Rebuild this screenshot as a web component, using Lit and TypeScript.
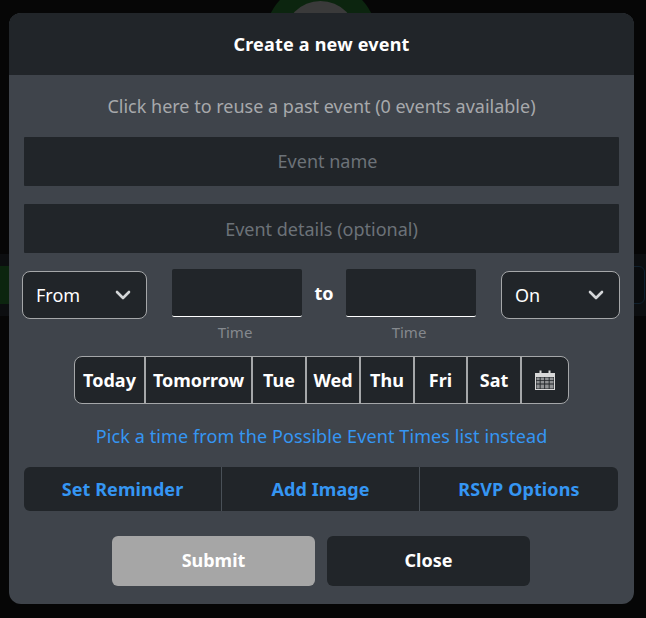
import { LitElement, html, css } from "lit";
import { customElement } from "lit/decorators.js";

const chevron = html`<svg class="chev" viewBox="0 0 16 16" width="16" height="16" aria-hidden="true"><path d="M2 5l6 6 6-6" fill="none" stroke="#d4d6d8" stroke-width="2.6" stroke-linecap="round" stroke-linejoin="round"/></svg>`;

@customElement("app-root")
export class AppRoot extends LitElement {
  static styles = css`
    :host { display: block; position: relative; width: 646px; height: 618px; overflow: hidden; background: #060606; font-family: "Noto Sans", sans-serif; color: #fff; }
    * { box-sizing: border-box; }
    .avatar-ring { position: absolute; left: 265px; top: -18px; width: 112px; height: 112px; border-radius: 50%; background: #0c250f; }
    .avatar { position: absolute; left: 284px; top: 1px; width: 73px; height: 73px; border-radius: 50%; background: #3a3a3a; }
    .panel { position: absolute; left: 0; top: 254px; width: 646px; height: 62px; background: #0c0e10; }
    .band-l { position: absolute; left: 0; top: 266px; width: 9px; height: 38px; background: #0c250f; }
    .band-r { position: absolute; left: 626px; top: 266px; width: 19px; height: 38px; border: 1px solid #10202d; border-radius: 6px; background: #0a0c0e; }
    .modal { position: absolute; left: 9px; top: 13px; width: 625px; height: 591px; border-radius: 12px; background: #3f444b; overflow: hidden; display: flex; flex-direction: column; }
    .header { height: 62px; flex: none; background: #212529; display: flex; align-items: center; justify-content: center; font-size: 18px; letter-spacing: 0.2px; font-weight: 700; padding-bottom: 1px; }
    .body { padding: 0 15px; display: flex; flex-direction: column; flex: 1; }
    .reuse { height: 62px; flex: none; display: flex; align-items: center; justify-content: center; color: #a7a9ac; font-size: 18px; }
    .field { width: 595px; height: 49px; flex: none; background: #212529; display: flex; align-items: center; justify-content: center; color: #6c7278; font-size: 18px; border-radius: 1px; margin-bottom: 18px; }
    .field.name { padding-left: 12px; padding-bottom: 1px; }
    .field.last { margin-bottom: 16px; }
    .row { display: flex; align-items: flex-start; margin-left: -2px; height: 87px; flex: none; }
    .select { height: 48px; flex: none; background: #212529; border: 1px solid #a5a7a9; border-radius: 8px; display: flex; align-items: center; justify-content: space-between; padding: 0 15px 0 13px; font-size: 18px; color: #fff; margin-top: 2px; }
    .from { width: 125px; margin-right: 25px; }
    .on { width: 119px; margin-left: 25px; }
    .time { width: 130px; flex: none; display: flex; flex-direction: column; align-items: center; }
    .time-box { width: 130px; height: 48px; background: #212529; border-bottom: 1px solid #fff; border-radius: 2px; }
    .time-label { font-size: 15px; color: #85898e; line-height: 19px; margin-top: 6px; padding-right: 4px; }
    .to { width: 44px; height: 48px; flex: none; display: flex; align-items: center; justify-content: center; font-weight: 700; font-size: 18px; }
    .days { display: flex; align-self: flex-start; margin-left: 50px; height: 48px; flex: none; border: 1px solid #a5a7a9; border-radius: 8px; background: #212529; overflow: hidden; }
    .day { display: flex; align-items: center; justify-content: center; font-weight: 700; font-size: 18px; border-right: 2px solid #a5a7a9; flex: none; }
    .day:last-child { border-right: 0; }
    .link { height: 63px; flex: none; display: flex; align-items: center; justify-content: center; color: #3596f3; font-size: 18px; letter-spacing: 0.1px; }
    .tabs { width: 594px; height: 44px; flex: none; display: flex; background: #212529; border-radius: 6px; overflow: hidden; }
    .tab { display: flex; align-items: center; justify-content: center; color: #3596f3; font-weight: 700; font-size: 18px; letter-spacing: 0.1px; border-right: 1px solid #495057; flex: none; }
    .tab:last-child { border-right: 0; }
    .actions { display: flex; width: 594px; justify-content: center; gap: 12px; margin-top: 25px; }
    .btn { width: 203px; height: 50px; border-radius: 6px; display: flex; align-items: center; justify-content: center; font-weight: 700; font-size: 18px; background: #212529; padding-bottom: 2px; }
    .btn.submit { background: #a6a6a6; }
    .chev { display: block; }
  `;

  render() {
    const days: [string, number][] = [["Today", 71], ["Tomorrow", 107], ["Tue", 54], ["Wed", 54], ["Thu", 54], ["Fri", 53], ["Sat", 54]];
    const tabs: [string, number][] = [["Set Reminder", 198], ["Add Image", 198], ["RSVP Options", 198]];
    return html`
      <div class="avatar-ring"></div>
      <div class="avatar"></div>
      <div class="panel"></div>
      <div class="band-l"></div>
      <div class="band-r"></div>
      <div class="modal">
        <div class="header">Create a new event</div>
        <div class="body">
          <div class="reuse">Click here to reuse a past event (0 events available)</div>
          <div class="field name">Event name</div>
          <div class="field last">Event details (optional)</div>
          <div class="row">
            <div class="select from"><span>From</span>${chevron}</div>
            <div class="time"><div class="time-box"></div><div class="time-label">Time</div></div>
            <div class="to">to</div>
            <div class="time"><div class="time-box"></div><div class="time-label">Time</div></div>
            <div class="select on"><span>On</span>${chevron}</div>
          </div>
          <div class="days">
            ${days.map(([d, w]) => html`<div class="day" style="width:${w}px">${d}</div>`)}
            <div class="day" style="width:46px">
              <svg width="20" height="20" viewBox="0 0 20 20" aria-hidden="true">
                <path d="M0 3h20v17H0z" fill="#d8d8d8"/>
                <path d="M1 7h18v12H1z" fill="#212529"/>
                <path d="M1.5 7.5h3.2v2.4H1.5zM5.6 7.5h3.6v2.4H5.6zM10.1 7.5h3.6v2.4h-3.6zM14.6 7.5h3.9v2.4h-3.9zM1.5 10.8h3.2v2.8H1.5zM5.6 10.8h3.6v2.8H5.6zM10.1 10.8h3.6v2.8h-3.6zM14.6 10.8h3.9v2.8h-3.9zM1.5 14.5h3.2v3.9H1.5zM5.6 14.5h3.6v3.9H5.6zM10.1 14.5h3.6v3.9h-3.6zM14.6 14.5h3.9v3.9h-3.9z" fill="#8f9193"/>
                <path d="M4.5 0.5h2v4h-2zM13.5 0.5h2v4h-2z" fill="#d8d8d8"/>
              </svg>
            </div>
          </div>
          <div class="link">Pick a time from the Possible Event Times list instead</div>
          <div class="tabs">
            ${tabs.map(([t, w]) => html`<div class="tab" style="width:${w}px">${t}</div>`)}
          </div>
          <div class="actions">
            <div class="btn submit">Submit</div>
            <div class="btn">Close</div>
          </div>
        </div>
      </div>
    `;
  }
}
